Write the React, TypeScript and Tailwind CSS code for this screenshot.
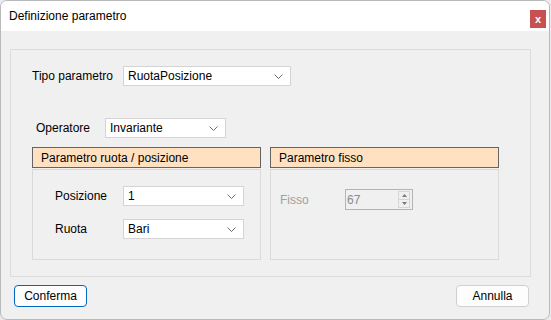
import { ReactNode } from "react"

const font = { fontFamily: '"Liberation Sans", Arial, sans-serif' }

const Chevron = () => (
  <svg width="9" height="5" viewBox="0 0 9 5" className="shrink-0">
    <path d="M0.5 0.5 L4.5 4.5 L8.5 0.5" fill="none" stroke="#6e6e6e" strokeWidth="1" />
  </svg>
)

const Combo = ({ value, width }: { value: string; width: string }) => (
  <div className={`${width} h-[20px] bg-white border border-[#d4d4d4] flex items-center pl-[4px] pr-[7px]`}>
    <span className="flex-1 text-[12px] text-black leading-none">{value}</span>
    <Chevron />
  </div>
)

const Group = ({ title, children }: { title: string; children: ReactNode }) => (
  <div className="w-[229px] h-[113px] flex flex-col">
    <div className="h-[21px] border border-[#646464] bg-[#ffe0c0] flex items-center pl-[8px] text-[12px] text-black">
      {title}
    </div>
    <div className="flex-1 mt-[1px] border border-[#dadada]">{children}</div>
  </div>
)

const App = () => {
  return (
    <div className="w-[551px] h-[320px] bg-[#e9ecef]" style={font}>
      <div className="w-[550px] h-[320px] border border-[#b9b9b9] rounded-[7px] overflow-hidden bg-[#f0f0f0] flex flex-col">
        {/* title bar */}
        <div className="h-[30px] bg-white flex items-center pl-[8px] pr-[3px]">
          <span className="text-[12px] text-black">Definizione parametro</span>
          <div className="ml-auto mt-[6px] w-[16px] h-[18px] bg-[#c75050] flex items-center justify-center text-white text-[11px] font-bold leading-none">
            x
          </div>
        </div>

        {/* body */}
        <div className="flex-1 pl-[9px] pt-[18px]">
          <div className="w-[521px] h-[228px] border border-[#dcdcdc] pl-[21px] pt-[16px]">
            <div className="flex items-center h-[20px]">
              <span className="w-[91px] text-[12px] text-black">Tipo parametro</span>
              <Combo value="RuotaPosizione" width="w-[168px]" />
            </div>

            <div className="flex items-center h-[20px] mt-[32px] pl-[4px]">
              <span className="w-[69px] text-[12px] text-black">Operatore</span>
              <Combo value="Invariante" width="w-[121px]" />
            </div>

            <div className="flex gap-[9px] mt-[9px]">
              <Group title="Parametro ruota / posizione">
                <div className="pl-[22px] pt-[16px] flex flex-col gap-[13px]">
                  <div className="flex items-center h-[20px]">
                    <span className="w-[68px] text-[12px] text-black">Posizione</span>
                    <Combo value="1" width="w-[121px]" />
                  </div>
                  <div className="flex items-center h-[20px]">
                    <span className="w-[68px] text-[12px] text-black">Ruota</span>
                    <Combo value="Bari" width="w-[121px]" />
                  </div>
                </div>
              </Group>

              <Group title="Parametro fisso">
                <div className="pl-[9px] pt-[19px]">
                  <div className="flex items-center h-[21px]">
                    <span className="w-[65px] text-[12px] text-[#a0a0a0]">Fisso</span>
                    <div className="w-[68px] h-[21px] border border-[#b4b4b4] bg-[#f0f0f0] flex items-center pl-[1px] pr-[2px]">
                      <span className="flex-1 text-[12px] text-[#8a8a8a] leading-none">67</span>
                      <div className="w-[12px] h-[17px] flex flex-col border border-[#d6d6d6] bg-[#f0f0f0]">
                        <div className="flex-1 flex items-center justify-center border-b border-[#d6d6d6]">
                          <svg width="5" height="3" viewBox="0 0 5 3">
                            <path d="M0 3 L2.5 0 L5 3 Z" fill="#7a7a7a" />
                          </svg>
                        </div>
                        <div className="flex-1 flex items-center justify-center">
                          <svg width="5" height="3" viewBox="0 0 5 3">
                            <path d="M0 0 L2.5 3 L5 0 Z" fill="#7a7a7a" />
                          </svg>
                        </div>
                      </div>
                    </div>
                  </div>
                </div>
              </Group>
            </div>
          </div>

          {/* buttons */}
          <div className="flex justify-between w-[521px] pl-[4px] pr-[2px] mt-[8px]">
            <button className="w-[73px] h-[22px] rounded-[4px] border border-[#0067c0] bg-[#fdfdfd] text-[12px] text-black leading-none">
              Conferma
            </button>
            <button className="w-[73px] h-[22px] rounded-[4px] border border-[#d0d0d0] bg-[#fdfdfd] text-[12px] text-black leading-none">
              Annulla
            </button>
          </div>
        </div>
      </div>
    </div>
  )
}

export default App
